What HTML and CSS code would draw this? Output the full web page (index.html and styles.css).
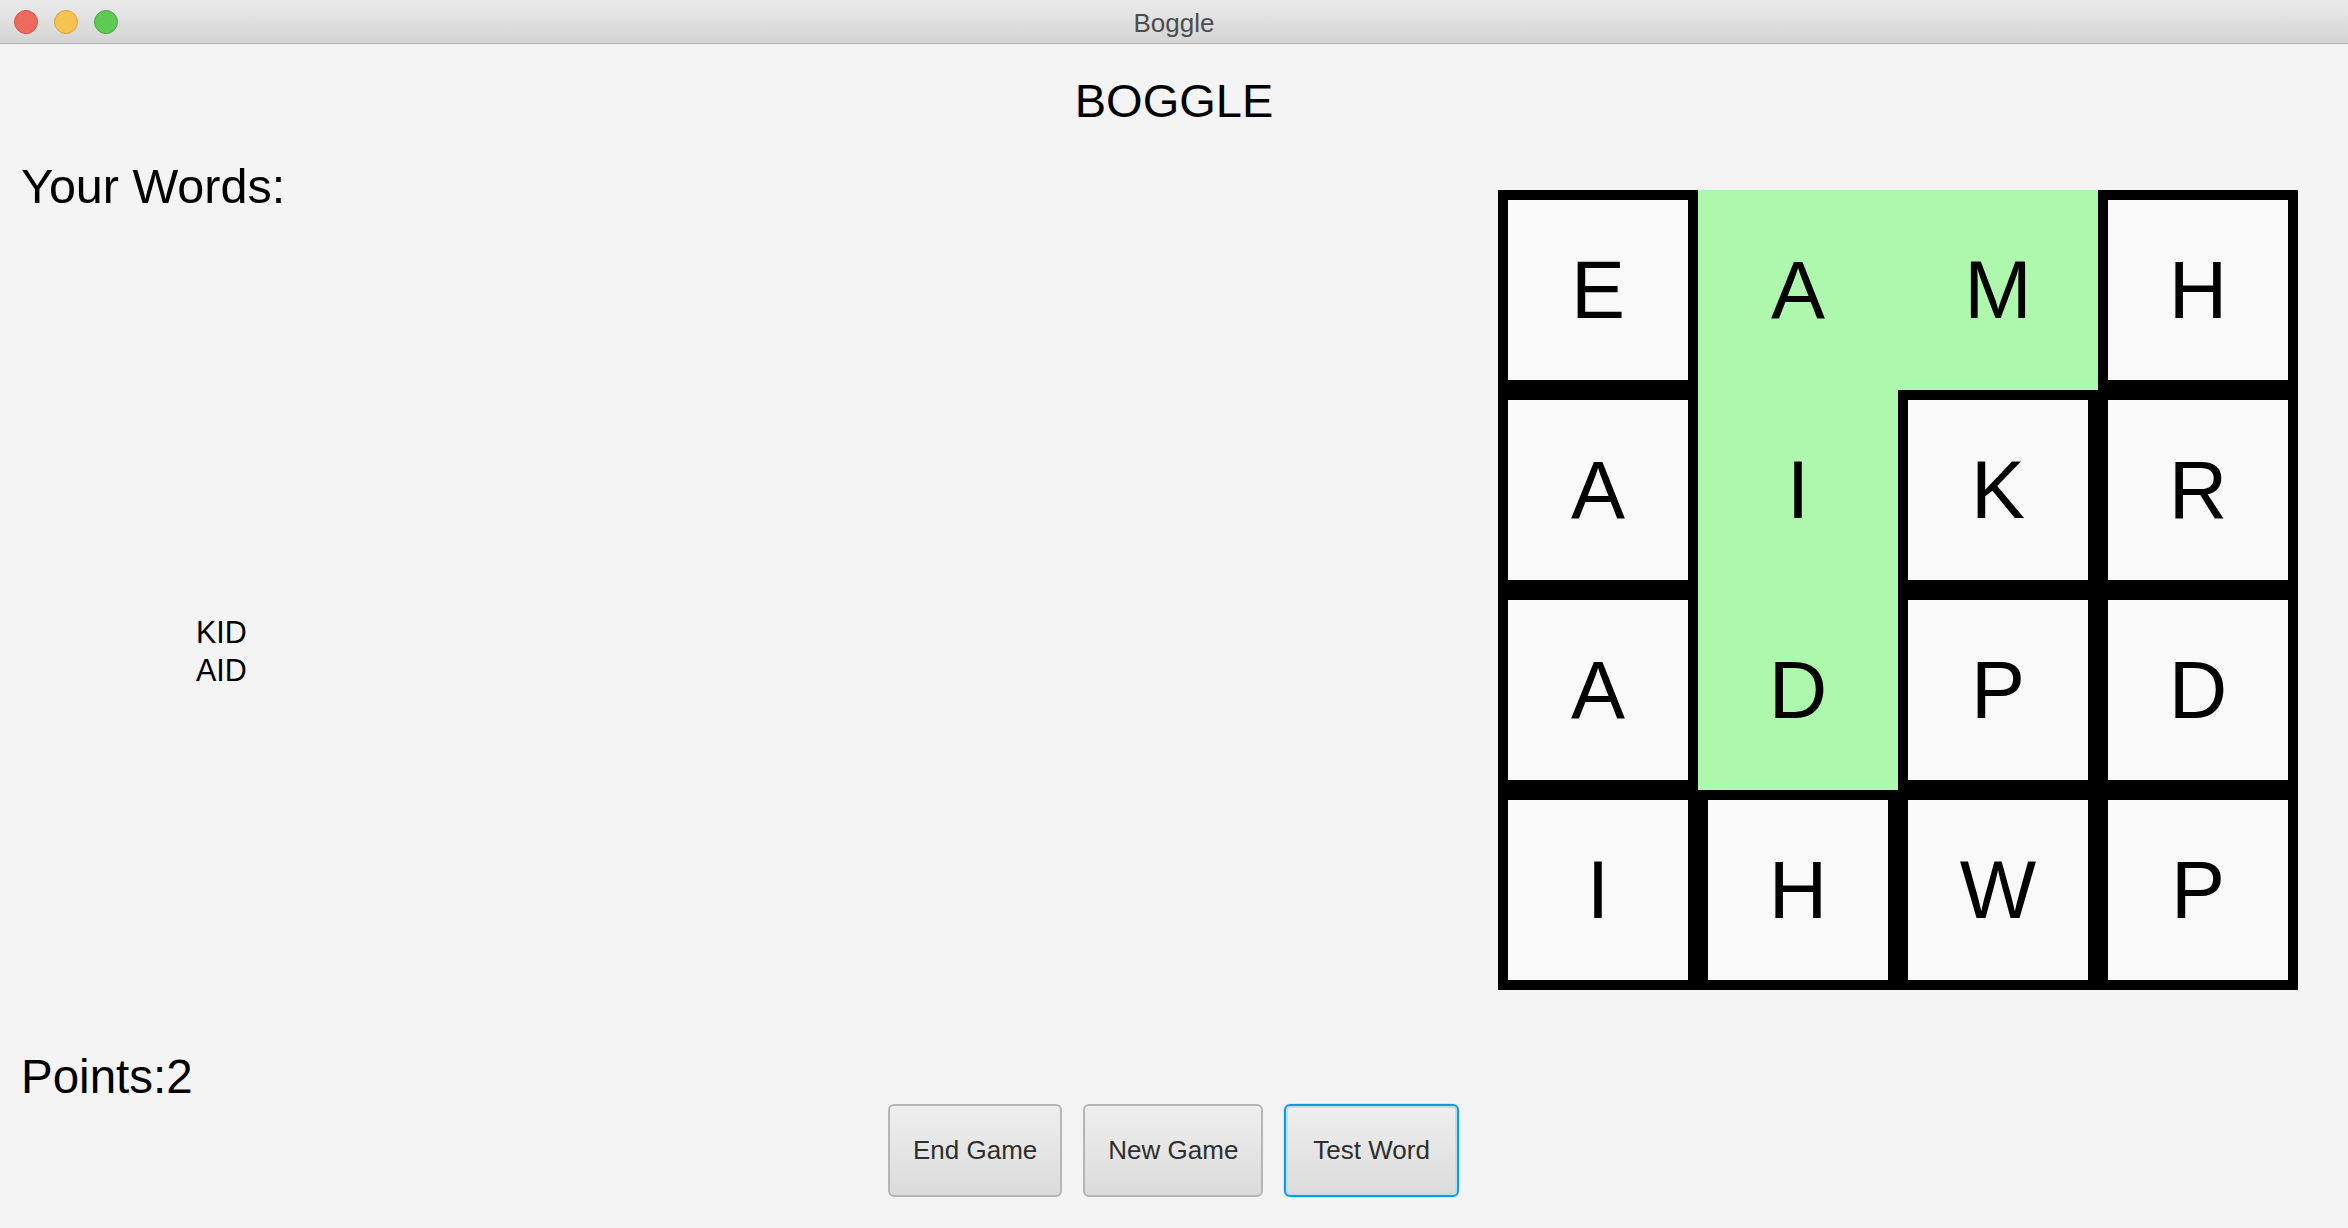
FILE: index.html
```html
<!DOCTYPE html>
<html>
<head>
<meta charset="utf-8">
<title>Boggle</title>
<link rel="stylesheet" href="styles.css">
</head>
<body>
<div class="window">
  <div class="titlebar">
    <div class="lights">
      <span class="light red"></span>
      <span class="light yellow"></span>
      <span class="light green"></span>
    </div>
    <div class="wintitle">Boggle</div>
    <div class="spacer"></div>
  </div>
  <div class="app">
    <div class="heading">BOGGLE</div>
    <div class="middle">
      <div class="left">
        <div class="label">Your Words:</div>
        <div class="words">
          <div>KID</div>
          <div>AID</div>
        </div>
      </div>
      <div class="board">
        <div class="cell">E</div>
        <div class="cell sel">A</div>
        <div class="cell sel">M</div>
        <div class="cell">H</div>
        <div class="cell">A</div>
        <div class="cell sel">I</div>
        <div class="cell">K</div>
        <div class="cell">R</div>
        <div class="cell">A</div>
        <div class="cell sel">D</div>
        <div class="cell">P</div>
        <div class="cell">D</div>
        <div class="cell">I</div>
        <div class="cell">H</div>
        <div class="cell">W</div>
        <div class="cell">P</div>
      </div>
    </div>
    <div class="label points">Points:2</div>
    <div class="buttons">
      <div class="btn">End Game</div>
      <div class="btn">New Game</div>
      <div class="btn focused">Test Word</div>
    </div>
  </div>
</div>
</body>
</html>
```

FILE: styles.css
```css
html, body {
  margin: 0;
  padding: 0;
}
body {
  width: 2348px;
  height: 1228px;
  overflow: hidden;
  background: #f4f4f4;
  font-family: "Liberation Sans", Arial, sans-serif;
  color: #000;
}
.window {
  display: flex;
  flex-direction: column;
  height: 1228px;
}
.titlebar {
  height: 43px;
  border-bottom: 1px solid #b3b3b3;
  background: linear-gradient(#ebebeb, #d4d4d4);
  display: grid;
  grid-template-columns: 1fr auto 1fr;
  align-items: center;
  flex: none;
}
.lights {
  display: flex;
  gap: 16px;
  padding-left: 14px;
}
.light {
  width: 22px;
  height: 22px;
  border-radius: 50%;
  display: block;
}
.light.red { background: #ee6a5f; border: 1px solid #d4534a; }
.light.yellow { background: #f6c351; border: 1px solid #d9a33b; }
.light.green { background: #5ec953; border: 1px solid #47a83d; }
.wintitle {
  font-size: 26px;
  color: #4d4d4d;
  line-height: 30px;
  padding-top: 2px;
}
.app {
  display: flex;
  flex-direction: column;
  flex: 1;
}
.heading {
  margin-top: 33px;
  text-align: center;
  font-size: 47px;
  line-height: 47px;
}
.middle {
  display: flex;
  justify-content: space-between;
  align-items: flex-start;
  padding: 0 50px 0 21px;
}
.left {
  padding-top: 38px;
}
.label {
  font-size: 48.5px;
  line-height: 48px;
}
.words {
  margin-top: 403px;
  padding-left: 175px;
  font-size: 30.5px;
  line-height: 38px;
}
.board {
  margin-top: 66px;
  display: grid;
  grid-template-columns: repeat(4, 200px);
  grid-template-rows: repeat(4, 200px);
}
.cell {
  box-sizing: border-box;
  border: 10px solid #000;
  background: #f9f9f9;
  display: flex;
  align-items: center;
  justify-content: center;
  font-size: 81px;
}
.cell.sel {
  background: #aef8ad;
  border-color: #aef8ad;
}
.points {
  margin-top: 63px;
  padding-left: 21px;
  font-size: 47.5px;
  line-height: 47px;
}
.buttons {
  margin-top: 4px;
  display: flex;
  gap: 21px;
  padding-left: 888px;
}
.btn {
  box-sizing: border-box;
  height: 93px;
  padding: 0 23px;
  display: flex;
  align-items: center;
  justify-content: center;
  font-size: 26px;
  color: #2e2e2e;
  border: 2px solid #b5b5b5;
  border-radius: 6px;
  background: linear-gradient(#efefef, #dbdbdb);
}
.btn.focused {
  padding: 0 27px;
  border: 2px solid #0a9fd9;
  box-shadow: inset 0 0 0 2px #bfdfee, 0 0 0 1px #cfe8f3;
}
```
